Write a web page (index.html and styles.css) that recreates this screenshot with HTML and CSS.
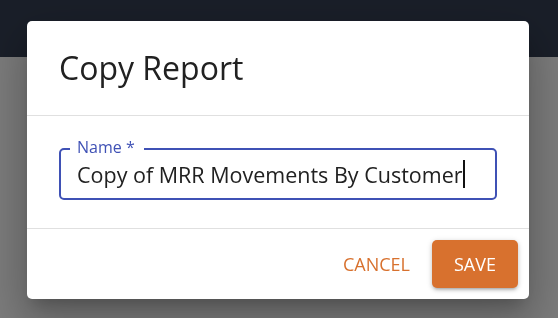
FILE: index.html
```html
<!DOCTYPE html>
<html lang="en">
<head>
    <meta charset="UTF-8">
    <meta name="viewport" content="width=device-width, initial-scale=1.0">
    <title>Copy Report</title>
    <link rel="stylesheet" href="styles.css">
</head>
<body>
    <div class="page">
        <div class="topbar"></div>
    </div>

    <div class="backdrop">
        <div class="dialog">
            <h2 class="dialog-title">Copy Report</h2>

            <div class="dialog-content">
                <div class="field">
                    <label class="field-label" for="name">Name *</label>
                    <div class="field-input" id="name">
                        <span class="field-value">Copy of MRR Movements By Customer</span><span class="caret"></span>
                    </div>
                </div>
            </div>

            <div class="dialog-actions">
                <button class="cancel-btn">Cancel</button>
                <button class="save-btn">Save</button>
            </div>
        </div>
    </div>
</body>
</html>
```

FILE: styles.css
```css
body {
    margin: 0;
    font-family: "Open Sans", "Noto Sans", sans-serif;
    background-color: #7b7b7b;
    height: 318px;
    overflow: hidden;
}
.page {
    height: 100%;
}
.topbar {
    height: 57px;
    background-color: #1a1f29;
}
.backdrop {
    position: fixed;
    inset: 0;
    display: flex;
    align-items: flex-start;
    padding: 21px 0 0 27px;
}
.dialog {
    width: 502px;
    background-color: white;
    border-radius: 5px;
    box-shadow: 0 11px 15px -7px rgba(0, 0, 0, 0.2),
                0 24px 38px 3px rgba(0, 0, 0, 0.14),
                0 9px 46px 8px rgba(0, 0, 0, 0.12);
}
.dialog-title {
    margin: 0;
    padding: 27px 32px 27px;
    font-size: 32px;
    font-weight: 400;
    line-height: 40px;
    color: #212121;
    border-bottom: 1px solid #e0e0e0;
}
.dialog-content {
    padding: 32px 32px 28px 32px;
    border-bottom: 1px solid #e0e0e0;
}
.field {
    position: relative;
}
.field-label {
    position: absolute;
    left: 11px;
    top: -12px;
    padding: 0 9px 0 7px;
    background-color: white;
    font-size: 16px;
    line-height: 22px;
    color: #3f51b5;
}
.field-input {
    display: flex;
    align-items: center;
    height: 48px;
    padding: 0 16px;
    border: 2px solid #3f51b5;
    border-radius: 5px;
    font-size: 21.5px;
    color: #212121;
}
.caret {
    width: 2px;
    height: 28px;
    background-color: #111;
}
.dialog-actions {
    display: flex;
    justify-content: flex-end;
    align-items: center;
    gap: 8px;
    padding: 11px;
}
.dialog-actions button {
    font-family: inherit;
    font-size: 18px;
    font-weight: 500;
    text-transform: uppercase;
    border: none;
    border-radius: 5px;
    cursor: pointer;
}
.cancel-btn {
    background: none;
    color: #d8712e;
    padding: 0 14px;
    height: 48px;
}
.save-btn {
    background-color: #d8712e;
    color: white;
    width: 86px;
    height: 48px;
    box-shadow: 0 3px 3px -2px rgba(0, 0, 0, 0.2),
                0 2px 4px 0 rgba(0, 0, 0, 0.14),
                0 1px 6px 0 rgba(0, 0, 0, 0.12);
}
```
